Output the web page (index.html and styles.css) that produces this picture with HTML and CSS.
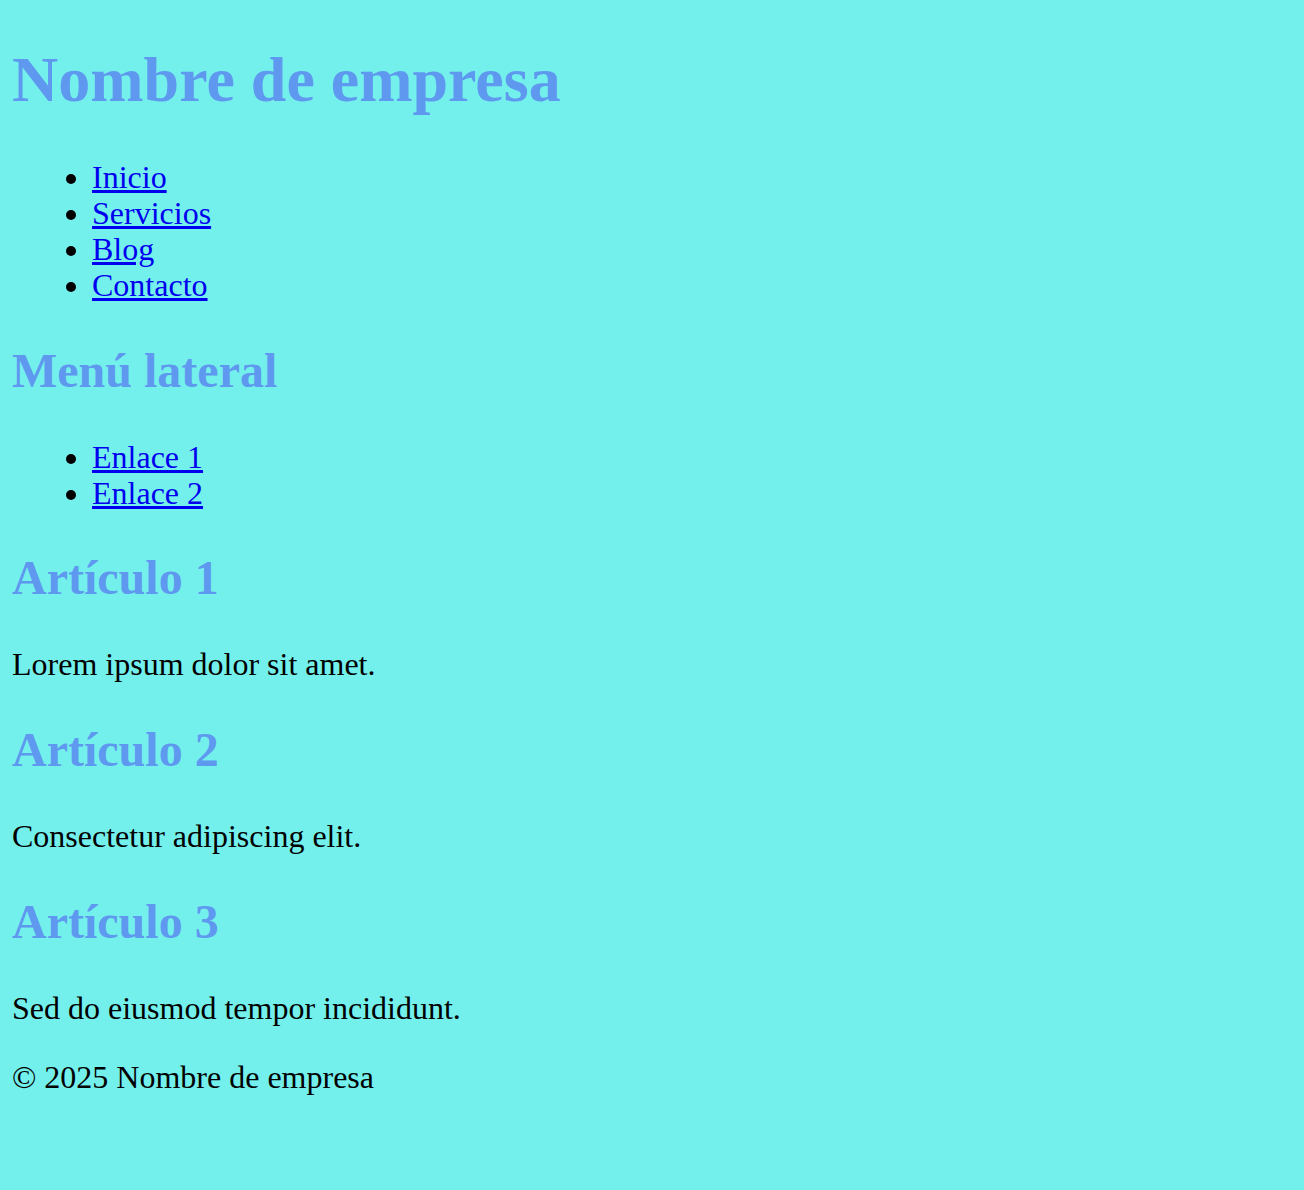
FILE: index.html
```html
<!DOCTYPE html>
<html lang="es">
<head>
<meta charset="utf-8">
<title>Nombre de empresa</title>
<link rel="stylesheet" href="styles.css">
</head>
<body>
<header>
  <h1>Nombre de empresa</h1>
  <nav>
    <ul>
      <li><a href="#">Inicio</a></li>
      <li><a href="#">Servicios</a></li>
      <li><a href="#">Blog</a></li>
      <li><a href="#">Contacto</a></li>
    </ul>
  </nav>
</header>
<aside>
  <h2>Menú lateral</h2>
  <ul>
    <li><a href="#">Enlace 1</a></li>
    <li><a href="#">Enlace 2</a></li>
  </ul>
</aside>
<main>
  <article>
    <h2>Artículo 1</h2>
    <p>Lorem ipsum dolor sit amet.</p>
  </article>
  <article>
    <h2>Artículo 2</h2>
    <p>Consectetur adipiscing elit.</p>
  </article>
  <article>
    <h2>Artículo 3</h2>
    <p>Sed do eiusmod tempor incididunt.</p>
  </article>
</main>
<footer>
  <p>&copy; 2025 Nombre de empresa</p>
</footer>
</body>
</html>
```
FILE: styles.css
```css
html {
  background: #74f0ec;
}
body {
  margin: 12px;
  font-family: "Liberation Serif", "Times New Roman", serif;
  font-size: 32px;
  line-height: 1.125;
  color: #000;
  background: #74f0ec;
}
h1, h2 {
  color: #5f98ef;
  font-weight: bold;
}
h1 {
  font-size: 2em;
  line-height: 72px;
  margin: 32px 0 0.67em;
}
h2 {
  font-size: 1.5em;
  line-height: 56px;
  margin: 0.83em 0;
}
ul {
  margin: 1em 0;
  padding-left: 80px;
}
p {
  margin: 1em 0;
}
footer p {
  margin-top: 33px;
}
a {
  color: #0000ee;
  text-decoration: underline;
}
```
